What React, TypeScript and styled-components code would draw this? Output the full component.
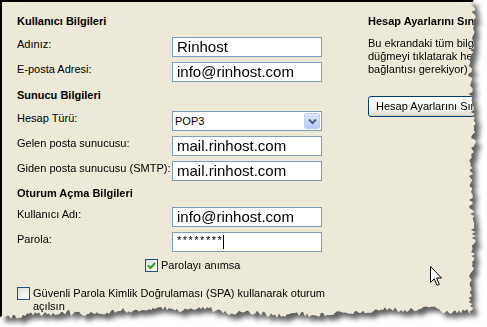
import React from 'react';
import styled, { createGlobalStyle } from 'styled-components';

const Global = createGlobalStyle`
  html, body { margin: 0; padding: 0; background: #fff; }
  body { font-family: "Liberation Sans", Arial, sans-serif; color: #000; }
`;

function makeTorn(): string {
  let s = 424242;
  const rnd = () => {
    s = (s * 1103515245 + 12345) & 0x7fffffff;
    return s / 0x7fffffff;
  };
  const pts: string[] = ['0px 0px'];
  for (let y = 0; y <= 312; y += 2) {
    const x = 472 + Math.sin(y / 17) * 1.8 + (rnd() - 0.5) * 5;
    pts.push(`${x.toFixed(1)}px ${y}px`);
  }
  for (let x = 471; x >= 0; x -= 2) {
    const base = x < 70 ? 317 - (x / 70) * 5 : 312 + Math.sin(x / 37) * 2.8;
    const y = base + Math.sin(x / 7) * 1.3 + (rnd() - 0.5) * 5;
    pts.push(`${x}px ${y.toFixed(1)}px`);
  }
  pts.push('0px 318px');
  return `polygon(${pts.join(',')})`;
}
const TORN = makeTorn();

const Stage = styled.div`
  position: relative;
  width: 487px;
  height: 327px;
  overflow: hidden;
  background: #fff;
`;

const ShadowWrap = styled.div`
  width: 100%;
  height: 100%;
  filter: drop-shadow(5px 5px 2.5px rgba(0, 0, 0, 0.62));
`;

const Panel = styled.div<{ $clip: string }>`
  box-sizing: border-box;
  width: 487px;
  height: 327px;
  background: #ece9d8;
  border-top: 2px solid #000;
  border-left: 2px solid #000;
  clip-path: ${(p) => p.$clip};
  display: flex;
  padding-left: 15px;
  font-size: 11px;
`;

const LeftCol = styled.div`
  display: flex;
  flex-direction: column;
  width: 305px;
  flex: none;
`;

const RightCol = styled.div`
  display: flex;
  flex-direction: column;
  align-items: flex-start;
  margin-left: 46px;
  white-space: nowrap;
`;

const Heading = styled.div<{ $mt: number; $mb: number }>`
  font-weight: bold;
  font-size: 11px;
  line-height: 14px;
  margin: ${(p) => p.$mt}px 0 ${(p) => p.$mb}px;
`;

const FieldRow = styled.div`
  display: flex;
  align-items: flex-start;
  height: 20px;
  & + & {
    margin-top: 5px;
  }
`;

const Label = styled.label`
  width: 155px;
  flex: none;
  font-size: 11px;
  line-height: 13px;
  padding-top: 1px;
`;

const TextBox = styled.div<{ $small?: boolean }>`
  position: relative;
  box-sizing: border-box;
  width: 150px;
  height: 20px;
  border: 1px solid #7f9db9;
  background: #fff;
  padding-left: 4px;
  font-size: ${(p) => (p.$small ? '11px' : '15px')};
  line-height: ${(p) => (p.$small ? '14px' : '18px')};
  letter-spacing: ${(p) => (p.$small ? '1.5px' : '0')};
  display: flex;
  align-items: ${(p) => (p.$small ? 'flex-start' : 'center')};
  white-space: nowrap;
`;

const Caret = styled.span`
  display: inline-block;
  width: 1px;
  height: 14px;
  margin-top: 2px;
  background: #000;
`;

const Select = styled.div`
  box-sizing: border-box;
  width: 150px;
  height: 20px;
  border: 1px solid #7f9db9;
  background: #fff;
  display: flex;
  align-items: center;
  justify-content: space-between;
  padding: 1px 1px 1px 2px;
  font-size: 11px;
`;

const DropButton = styled.div`
  box-sizing: border-box;
  width: 16px;
  height: 16px;
  border: 1px solid #bacdf5;
  border-radius: 2px;
  background: linear-gradient(#dce7fd, #b7cbf7);
  display: flex;
  align-items: center;
  justify-content: center;
`;

const CheckRow = styled.div<{ $mt: number; $pl: number }>`
  display: flex;
  align-items: flex-start;
  margin-top: ${(p) => p.$mt}px;
  padding-left: ${(p) => p.$pl}px;
  gap: 3px;
  font-size: 11px;
  line-height: 13px;
  white-space: nowrap;
`;

const Box = styled.div`
  box-sizing: border-box;
  flex: none;
  width: 13px;
  height: 13px;
  border: 1px solid #1c5180;
  background: linear-gradient(135deg, #dcdcd7, #ffffff);
  display: flex;
  align-items: center;
  justify-content: center;
`;

const Para = styled.div`
  font-size: 11px;
  line-height: 13px;
  margin-bottom: 20px;
`;

const XPButton = styled.div`
  box-sizing: border-box;
  height: 21px;
  width: 140px;
  border: 1px solid #003c74;
  border-radius: 3px;
  background: linear-gradient(#ffffff, #f2f1ec 70%, #d8d3c8);
  font-size: 11px;
  line-height: 19px;
  padding-left: 7px;
`;

const Pointer = styled.svg`
  position: absolute;
  left: 430px;
  top: 266px;
`;

export default function App() {
  return (
    <Stage>
      <Global />
      <ShadowWrap>
        <Panel $clip={TORN}>
          <LeftCol>
            <Heading $mt={12} $mb={9}>Kullanıcı Bilgileri</Heading>
            <FieldRow>
              <Label>Adınız:</Label>
              <TextBox>Rinhost</TextBox>
            </FieldRow>
            <FieldRow>
              <Label>E-posta Adresi:</Label>
              <TextBox>info@rinhost.com</TextBox>
            </FieldRow>
            <Heading $mt={6} $mb={9}>Sunucu Bilgileri</Heading>
            <FieldRow>
              <Label>Hesap Türü:</Label>
              <Select>
                <span>POP3</span>
                <DropButton>
                  <svg width="9" height="7" viewBox="0 0 9 7">
                    <path d="M1 1.5 L4.5 5 L8 1.5" fill="none" stroke="#4d6185" strokeWidth="2" />
                  </svg>
                </DropButton>
              </Select>
            </FieldRow>
            <FieldRow>
              <Label>Gelen posta sunucusu:</Label>
              <TextBox>mail.rinhost.com</TextBox>
            </FieldRow>
            <FieldRow>
              <Label>Giden posta sunucusu (SMTP):</Label>
              <TextBox>mail.rinhost.com</TextBox>
            </FieldRow>
            <Heading $mt={5} $mb={7}>Oturum Açma Bilgileri</Heading>
            <FieldRow>
              <Label>Kullanıcı Adı:</Label>
              <TextBox>info@rinhost.com</TextBox>
            </FieldRow>
            <FieldRow>
              <Label>Parola:</Label>
              <TextBox $small>
                <span>********</span>
                <Caret />
              </TextBox>
            </FieldRow>
            <CheckRow $mt={7} $pl={128}>
              <Box>
                <svg width="9" height="9" viewBox="0 0 9 9">
                  <path d="M1 4.5 L3.5 7 L8 2" fill="none" stroke="#21a121" strokeWidth="2" />
                </svg>
              </Box>
              <span>Parolayı anımsa</span>
            </CheckRow>
            <CheckRow $mt={15} $pl={0}>
              <Box />
              <span>
                Güvenli Parola Kimlik Doğrulaması (SPA) kullanarak oturum
                <br />
                açılsın
              </span>
            </CheckRow>
          </LeftCol>
          <RightCol>
            <Heading $mt={12} $mb={9}>Hesap Ayarlarını Sınama</Heading>
            <Para>
              Bu ekrandaki tüm bilgileri doldurduktan sonra aşağıdaki
              <br />
              düğmeyi tıklatarak hesabınızı sınamanızı öneririz. (Ağ
              <br />
              bağlantısı gerekiyor)
            </Para>
            <XPButton>Hesap Ayarlarını Sına...</XPButton>
          </RightCol>
        </Panel>
      </ShadowWrap>
      <Pointer width="13" height="21" viewBox="0 0 13 21">
        <path
          d="M0.5 0.5 L0.5 16.5 L4.3 12.8 L7 19.3 L9.3 18.3 L6.6 12 L11.5 12 Z"
          fill="#fff"
          stroke="#000"
          strokeWidth="1"
          strokeLinejoin="miter"
        />
      </Pointer>
    </Stage>
  );
}
